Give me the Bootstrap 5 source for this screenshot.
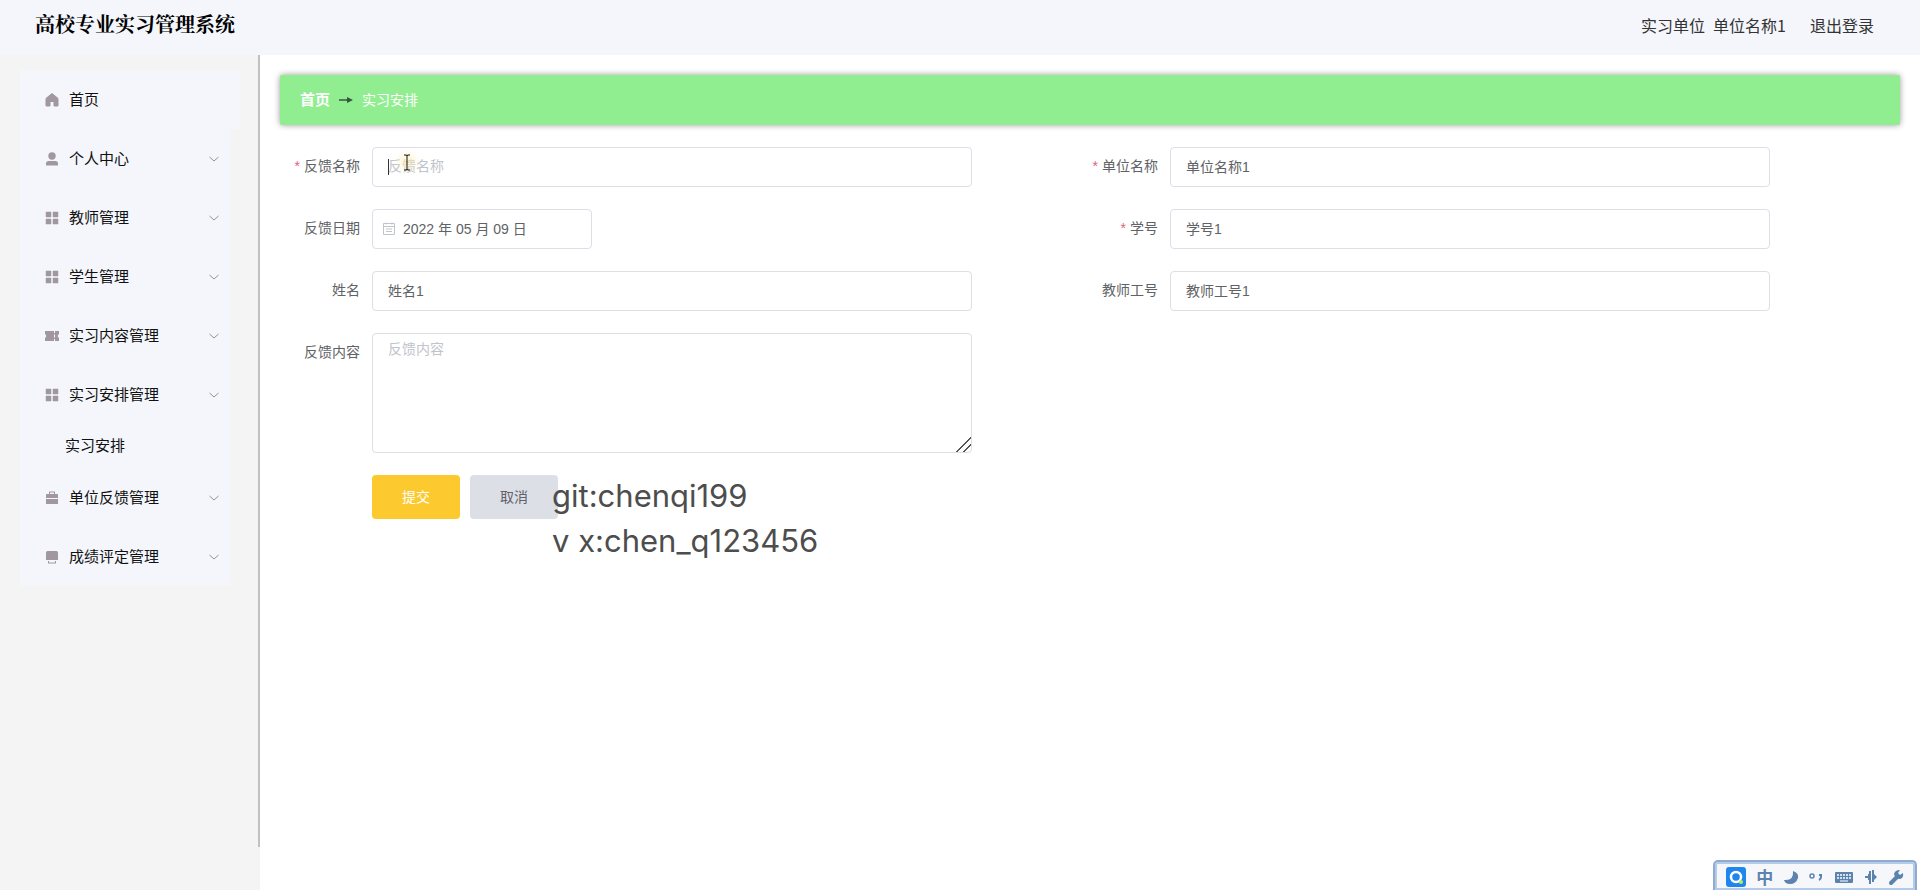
<!DOCTYPE html>
<html lang="zh-CN">
<head>
<meta charset="utf-8">
<meta name="viewport" content="width=device-width, initial-scale=1">
<title>高校专业实习管理系统</title>
<link rel="stylesheet" href="https://cdn.jsdelivr.net/npm/bootstrap@5.3.0/dist/css/bootstrap.min.css">
<style>
body{font-family:"Liberation Sans","Noto Sans CJK SC",sans-serif;font-size:14px;color:#606266;background:#fff}
.topbar{height:55px;background:#f4f6fb;padding:0 46px 6px 35px}
.brand-title{font:700 20px/32px "Liberation Serif","Noto Serif CJK SC","Noto Sans CJK SC",serif;color:#000}
.topbar-user{font:16px/24px "Noto Sans CJK SC",sans-serif;color:#333}
.sidebar{width:260px;background:#f4f4f4;padding:15px 20px}
.sidebar-thumb{right:0;top:0;width:2px;bottom:43px;background:#c1c1c1}
.side-menu{background:#f4f6fb;width:210px}
.side-link{height:59px;padding:0 10px 0 24px;color:#111;font-size:15px;line-height:24px;background:#f4f6fb}
.side-home{width:220px}
.side-sub{height:44px;padding-left:45px}
.side-ico{width:16px;height:16px;margin-right:9px;fill:#a0979f}
.side-arrow{width:12px;height:12px;fill:none;stroke:#909399}
.crumbs{height:50px;background:#90ee90;border-radius:2px;padding:0 20px;box-shadow:0 0 6px rgba(0,0,0,.4);color:#fff}
.crumbs a{font-size:15px;font-weight:700;color:#fff}
.workspace{padding:20px}
.entry-form{padding:22px 12px 0}
.entry-row{margin-bottom:22px}
.entry-label{width:80px;padding-right:12px;line-height:38px;text-align:right;white-space:nowrap}
.need::before{content:"*";color:#e0637f;margin-right:4px}
.entry-box{max-width:600px}
.entry-box .form-control{height:40px;padding:0 15px 2px;font-size:14px;color:#606266;border:1px solid #dcdfe6;border-radius:4px;box-shadow:none}
.entry-box .form-control::placeholder{color:#c0c4cc}
.entry-box textarea.form-control{height:120px;padding:5px 15px;line-height:21px;display:block}
.entry-box textarea::-webkit-resizer{background:linear-gradient(135deg,transparent 47%,#555 47%,#555 54%,transparent 54%,transparent 72%,#555 72%,#555 79%,transparent 79%)}
.date-box{width:220px}
.entry-box.date-box .form-control{padding-left:30px}
.date-box svg{left:10px;top:13px;width:14px;height:14px}
.form-actions{gap:10px;padding-left:80px}
.form-btn{width:88px;height:44px;border:0;border-radius:4px;font-size:14px;color:#fff;background:#fcc92f}
.form-btn.cancel{background:#dcdfe6;color:#606266}
.caret-line{left:16px;top:12px;width:1px;height:16px;background:#333}
.pointer-mark{left:22px;top:2px;width:26px;height:26px;border-radius:50%;background:radial-gradient(rgba(255,236,170,.6),rgba(255,236,170,0) 70%)}
.contact-note{left:552px;top:473px;font:31px/45px "Inter",sans-serif;color:#4d4d4d;z-index:3}
.ime-bar{right:3px;bottom:0;height:30px;width:204px;border:2px solid #8fabd2;border-bottom:0;border-radius:5px 5px 0 0;background:#f5f7fb;box-shadow:inset 0 0 0 2px #b4cbe8;padding:4px 11px 0;color:#5b83ae}
.ime-bar svg{height:22px;display:block}
.ime-bar span{font:700 17px/22px "Noto Sans CJK SC",sans-serif}
</style>
</head>
<body class="min-vh-100 d-flex flex-column position-relative">
<svg class="d-none" aria-hidden="true">
<symbol id="i-home" viewBox="0 0 16 16"><path d="M8 1.500 2 6.400V14h4V9.500h4V14h4V6.400z" stroke="#a0979f" stroke-linejoin="round"/></symbol>
<symbol id="i-user" viewBox="0 0 16 16"><circle cx="8" cy="5" r="3.700"/><path d="M2 14.500v-2Q2 10 4.500 10h7Q14 10 14 12.500v2z"/></symbol>
<symbol id="i-grid" viewBox="0 0 16 16"><path d="M2 2h5v5H2zM9 2h5v5H9zM2 9h5v5H2zM9 9h5v5H9z" stroke="#a0979f" stroke-width=".5"/></symbol>
<symbol id="i-ticket" viewBox="0 0 16 16"><path d="M1 3h9v2h1V3h4v3q-2.600 2 0 4v3h-4v-2h-1v2H1v-3q2.600-2 0-4zM10 6.500v3h1v-3z" fill-rule="evenodd"/></symbol>
<symbol id="i-case" viewBox="0 0 16 16"><path d="M5 4V1.500h6V4h2q1 0 1 1v3H2V5q0-1 1-1zm1 0h4V2.500H6zM2 9h12v5H2z" fill-rule="evenodd"/></symbol>
<symbol id="i-board" viewBox="0 0 16 16"><path d="M3.500 2h9Q14 2 14 4v7H2V4q0-2 1.500-2zM4 12h1v1.500h6V12h1v2.500H4z"/></symbol>
<symbol id="i-down" viewBox="0 0 12 12"><path d="m1.500 4 4.500 4 4.500-4"/></symbol>
</svg>
<header class="topbar d-flex align-items-center justify-content-between flex-shrink-0">
<h1 class="brand-title m-0">高校专业实习管理系统</h1>
<div class="topbar-user d-flex"><span class="me-2">实习单位</span><span class="me-4">单位名称1</span><a href="#" class="text-reset text-decoration-none">退出登录</a></div>
</header>
<div class="d-flex flex-grow-1">
<nav class="sidebar flex-shrink-0 position-relative">
<div class="side-menu">
<a href="#" class="side-link side-home d-flex align-items-center text-decoration-none"><svg class="side-ico"><use href="#i-home"/></svg>首页</a>
<a href="#" class="side-link d-flex align-items-center text-decoration-none"><svg class="side-ico"><use href="#i-user"/></svg>个人中心<svg class="side-arrow ms-auto"><use href="#i-down"/></svg></a>
<a href="#" class="side-link d-flex align-items-center text-decoration-none"><svg class="side-ico"><use href="#i-grid"/></svg>教师管理<svg class="side-arrow ms-auto"><use href="#i-down"/></svg></a>
<a href="#" class="side-link d-flex align-items-center text-decoration-none"><svg class="side-ico"><use href="#i-grid"/></svg>学生管理<svg class="side-arrow ms-auto"><use href="#i-down"/></svg></a>
<a href="#" class="side-link d-flex align-items-center text-decoration-none"><svg class="side-ico"><use href="#i-ticket"/></svg>实习内容管理<svg class="side-arrow ms-auto"><use href="#i-down"/></svg></a>
<a href="#" class="side-link d-flex align-items-center text-decoration-none"><svg class="side-ico"><use href="#i-grid"/></svg>实习安排管理<svg class="side-arrow ms-auto"><use href="#i-down"/></svg></a>
<a href="#" class="side-link side-sub d-flex align-items-center text-decoration-none">实习安排</a>
<a href="#" class="side-link d-flex align-items-center text-decoration-none"><svg class="side-ico"><use href="#i-case"/></svg>单位反馈管理<svg class="side-arrow ms-auto"><use href="#i-down"/></svg></a>
<a href="#" class="side-link d-flex align-items-center text-decoration-none"><svg class="side-ico"><use href="#i-board"/></svg>成绩评定管理<svg class="side-arrow ms-auto"><use href="#i-down"/></svg></a>
</div>
<div class="sidebar-thumb position-absolute"></div>
</nav>
<main class="workspace flex-grow-1">
<div class="crumbs d-flex align-items-center"><a href="#" class="text-decoration-none">首页</a>
<svg class="mx-2" width="16" height="10" viewBox="0 0 16 10"><path d="M1 5h9" stroke="#35543d" stroke-width="1.500"/><path d="m9 2 6 3-6 3z" fill="#35543d"/></svg><span>实习安排</span></div>
<form class="entry-form">
<div class="row g-0">
<div class="col-6 d-flex entry-row"><label class="entry-label need" for="f1">反馈名称</label><div class="entry-box flex-grow-1 position-relative"><input id="f1" class="form-control" placeholder="反馈名称"><i class="caret-line position-absolute"></i><i class="pointer-mark position-absolute"><svg class="d-block" width="26" height="26" viewBox="0 0 26 26"><path d="M10 6h2.500l.500 1 .500-1H16M13 7v13M10 21h2.500l.500-1 .500 1H16" fill="none" stroke="#111"/></svg></i></div></div>
<div class="col-6 d-flex entry-row"><label class="entry-label need" for="f2">单位名称</label><div class="entry-box flex-grow-1"><input id="f2" class="form-control" value="单位名称1"></div></div>
<div class="col-6 d-flex entry-row"><label class="entry-label" for="f3">反馈日期</label><div class="entry-box date-box position-relative"><input id="f3" class="form-control" value="2022 年 05 月 09 日"><svg class="position-absolute" viewBox="0 0 14 14" fill="none" stroke="#c0c4cc"><path d="M1.500 1.500h11v11h-11zM1.500 4.500h11M4 7h6M4 9.500h6M4 .500v2M10 .500v2"/></svg></div></div>
<div class="col-6 d-flex entry-row"><label class="entry-label need" for="f4">学号</label><div class="entry-box flex-grow-1"><input id="f4" class="form-control" value="学号1"></div></div>
<div class="col-6 d-flex entry-row"><label class="entry-label" for="f5">姓名</label><div class="entry-box flex-grow-1"><input id="f5" class="form-control" value="姓名1"></div></div>
<div class="col-6 d-flex entry-row"><label class="entry-label" for="f6">教师工号</label><div class="entry-box flex-grow-1"><input id="f6" class="form-control" value="教师工号1"></div></div>
<div class="col-6 d-flex entry-row"><label class="entry-label" for="f7">反馈内容</label><div class="entry-box flex-grow-1"><textarea id="f7" class="form-control" placeholder="反馈内容"></textarea></div></div>
</div>
<div class="form-actions d-flex"><button type="submit" class="form-btn">提交</button><button type="button" class="form-btn cancel">取消</button></div>
</form>
</main>
</div>
<div class="contact-note position-absolute">git:chenqi199<br>v x:chen_q123456</div>
<div class="ime-bar position-absolute d-flex justify-content-between">
<svg width="20" viewBox="0 0 20 22"><rect y="1" width="20" height="20" rx="3" fill="#1f86ee"/><circle cx="10" cy="11" r="5" fill="none" stroke="#fff" stroke-width="2.500"/><circle cx="15" cy="16" r="2" fill="#b8ec5a"/></svg>
<span>中</span>
<svg width="16" viewBox="0 0 16 22" fill="currentColor"><path d="M10 5q6 2 5 7-2 6-8 6-5 0-6-4 10 1 9-9z"/></svg>
<svg width="14" viewBox="0 0 14 22" fill="none" stroke="currentColor" stroke-width="1.500"><circle cx="3" cy="10" r="2"/><path d="M10 9h2v2q0 2-2 3" stroke-width="2"/></svg>
<svg width="20" viewBox="0 0 20 22"><rect x="1" y="6" width="18" height="11" rx="1" fill="currentColor"/><path d="M3 9h14M3 12h14" stroke="#fff" stroke-width="1.500" stroke-dasharray="2 1"/><path d="M6 15h8" stroke="#fff"/></svg>
<svg width="14" viewBox="0 0 14 22" fill="currentColor"><path d="M5 5h2v13H5v-4H4v-2H1v-2h3V8h1zM8 4h2v4l3 3-3 3v2H8z"/></svg>
<svg width="16" viewBox="0 0 16 22"><path d="m3 17 6-6" stroke="currentColor" stroke-width="4" stroke-linecap="round"/><path d="M6 8q1-4 6-4l-2 3 2 2 3-2q1 5-3 6-5 0-6-5z" fill="currentColor"/></svg>
</div>
<script src="https://cdn.jsdelivr.net/npm/bootstrap@5.3.0/dist/js/bootstrap.bundle.min.js"></script>
</body>
</html>
